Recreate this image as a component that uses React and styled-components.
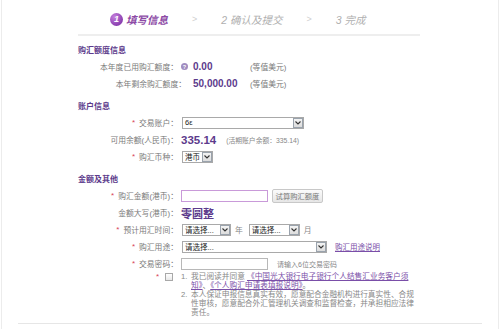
import React from 'react'
import styled, { createGlobalStyle } from 'styled-components'

const GlobalStyle = createGlobalStyle`
    html, body {
        margin: 0;
        padding: 0;
        background: #fff;
    }
    body {
        font-family: "Liberation Sans", "Noto Sans CJK SC", sans-serif;
        color: #777;
    }
`

const Frame = styled.div`
    width: 498px;
    height: 329px;
    margin-left: 1px;
    box-sizing: border-box;
    border-left: 1px solid #ececec;
    border-right: 1px solid #ececec;
    overflow: hidden;
`

const Column = styled.div`
    margin-left: 76px;
    width: 342px;
`

const Steps = styled.div`
    display: flex;
    align-items: center;
    gap: 24px;
    height: 30px;
    padding: 4px 0 0 32px;
    border-bottom: 2px solid #eeeeee;
`

const Step = styled.div`
    display: flex;
    align-items: center;
    gap: 3px;
    font-size: 10.5px;
    font-style: italic;
    font-weight: ${p => (p.$active ? 'bold' : 'normal')};
    color: ${p => (p.$active ? '#8d4aa6' : '#b0b0b0')};
`

const StepDot = styled.span`
    width: 13px;
    height: 13px;
    border-radius: 50%;
    background: radial-gradient(circle at 35% 30%, #c57fdc, #8a3fb0 70%);
    color: #fff;
    font-size: 9px;
    font-weight: bold;
    display: flex;
    align-items: center;
    justify-content: center;
`

const Chevron = styled.span`
    color: #cfcfcf;
    font-size: 9px;
    font-style: normal;
`

const Section = styled.div`
    margin-top: 5px;
`

const Heading = styled.div`
    height: 17px;
    display: flex;
    align-items: center;
    font-size: 8px;
    font-weight: bold;
    color: #5d3b8c;
`

const Row = styled.div`
    display: grid;
    grid-template-columns: ${p => p.$label || 103}px 1fr;
    column-gap: ${p => p.$gap || 0}px;
    align-items: center;
    height: 17px;
`

const Label = styled.div`
    display: flex;
    justify-content: flex-end;
    align-items: center;
    font-size: 7.8px;
    color: #7a7a7a;
    padding-right: ${p => (p.$pad === undefined ? 3 : p.$pad)}px;
    white-space: nowrap;
`

const Star = styled.span`
    color: #d8435a;
    font-size: 8px;
    margin-right: 4px;
`

const Help = styled.span`
    width: 7px;
    height: 7px;
    border-radius: 50%;
    background: #a08cc0;
    color: #fff;
    font-size: 5.5px;
    font-weight: bold;
    display: inline-flex;
    align-items: center;
    justify-content: center;
    margin-left: 3px;
`

const Value = styled.div`
    display: flex;
    align-items: center;
    font-size: 7.8px;
    color: #7a7a7a;
    white-space: nowrap;
`

const Amount = styled.span`
    font-weight: bold;
    color: #5d3b8c;
    font-size: ${p => p.$size || 10}px;
    width: ${p => (p.$w ? p.$w + 'px' : 'auto')};
`

const Hint = styled.span`
    font-size: ${p => p.$size || 7.8}px;
    color: #888;
    margin-left: ${p => p.$ml || 0}px;
`

const SelectBox = styled.div`
    display: flex;
    align-items: center;
    justify-content: space-between;
    box-sizing: border-box;
    width: ${p => p.$w}px;
    height: 12px;
    margin-left: 1px;
    border: 1px solid #a9a9a9;
    background: #fff;
    font-size: 7.5px;
    color: #222;
    padding-left: 2px;
    white-space: nowrap;
`

const ArrowBox = styled.span`
    box-sizing: border-box;
    flex: none;
    width: 10px;
    height: 10px;
    border: 1px solid #9aa3ad;
    background: linear-gradient(#f4f4f4, #dcdcdc);
    display: flex;
    align-items: center;
    justify-content: center;
`

const TextInput = styled.div`
    box-sizing: border-box;
    width: ${p => p.$w}px;
    height: 12px;
    border: 1px solid ${p => (p.$focus ? '#c99ad9' : '#b8b8b8')};
    background: #fff;
`

const Button = styled.button`
    margin-left: 4px;
    height: 14px;
    width: 51px;
    padding: 0;
    border: 1px solid #c8c8c8;
    border-radius: 2px;
    background: linear-gradient(#fbfbfb, #e6e6e6);
    font-family: inherit;
    font-size: 7.3px;
    color: #777;
`

const Unit = styled.span`
    font-size: 7.8px;
    color: #888;
    margin: 0 5px 0 4px;
`

const Link = styled.a`
    color: #7a4ea8;
    text-decoration: underline;
    font-size: 7.5px;
    margin-left: 8px;
`

const Agreement = styled.div`
    display: grid;
    grid-template-columns: 103px 1fr;
    align-items: start;
`

const CheckCell = styled.div`
    display: flex;
    justify-content: flex-end;
    align-items: center;
    height: 9px;
    padding-right: 8px;
`

const Check = styled.span`
    box-sizing: border-box;
    width: 8px;
    height: 8px;
    border: 1px solid #a8a8a8;
    background: linear-gradient(#fff, #e8e8e8);
    margin-left: 2px;
`

const Terms = styled.ol`
    margin: 0;
    padding: 0;
    list-style: none;
    width: 236px;
    font-size: 7.7px;
    line-height: 9px;
    color: #888;
`

const Term = styled.li`
    display: grid;
    grid-template-columns: 10px 1fr;
`

const TermLine = styled.span`
    display: block;
`

const TermLink = styled.a`
    color: #7a4ea8;
    text-decoration: underline;
`

const Rule = styled.div`
    margin: 6px 16px 0 16px;
    border-top: 1px solid #e6e6e6;
`

function Arrow()
{
    return (
        <ArrowBox>
            <svg width="6" height="4" viewBox="0 0 6 4">
                <polyline points="0.5,0.5 3,3 5.5,0.5" fill="none" stroke="#333" strokeWidth="1.1" />
            </svg>
        </ArrowBox>
    )
}

function Select({ width, children })
{
    return (
        <SelectBox $w={width}>
            <span>{children}</span>
            <Arrow />
        </SelectBox>
    )
}

export default function App()
{
    return (
        <>
            <GlobalStyle />
            <Frame>
                <Column>
                    <Steps>
                        <Step $active><StepDot>1</StepDot>填写信息</Step>
                        <Chevron>&gt;</Chevron>
                        <Step>2 确认及提交</Step>
                        <Chevron>&gt;</Chevron>
                        <Step>3 完成</Step>
                    </Steps>

                    <Section>
                        <Heading>购汇额度信息</Heading>
                        <Row $label={110} $gap={5}>
                            <Label $pad={0}>本年度已用购汇额度：<Help>?</Help></Label>
                            <Value><Amount $w={57}>0.00</Amount>(等值美元)</Value>
                        </Row>
                        <Row $label={110} $gap={5}>
                            <Label $pad={2}>本年剩余购汇额度：</Label>
                            <Value><Amount $w={57}>50,000.00</Amount>(等值美元)</Value>
                        </Row>
                    </Section>

                    <Section>
                        <Heading>账户信息</Heading>
                        <Row>
                            <Label><Star>*</Star>交易账户：</Label>
                            <Value><Select width={122}>6ε</Select></Value>
                        </Row>
                        <Row>
                            <Label>可用余额(人民币)：</Label>
                            <Value>
                                <Amount $size={11.5}>335.14</Amount>
                                <Hint $size={6.8} $ml={10}>(活期账户余额：335.14)</Hint>
                            </Value>
                        </Row>
                        <Row>
                            <Label><Star>*</Star>购汇币种：</Label>
                            <Value><Select width={31}>港币</Select></Value>
                        </Row>
                    </Section>

                    <Section>
                        <Heading>金额及其他</Heading>
                        <Row>
                            <Label><Star>*</Star>购汇金额(港币)：</Label>
                            <Value>
                                <TextInput $w={87} $focus />
                                <Button>试算购汇额度</Button>
                            </Value>
                        </Row>
                        <Row>
                            <Label>金额大写(港币)：</Label>
                            <Value><Amount $size={11}>零圆整</Amount></Value>
                        </Row>
                        <Row>
                            <Label><Star>*</Star>预计用汇时间：</Label>
                            <Value>
                                <Select width={49}>请选择...</Select>
                                <Unit>年</Unit>
                                <Select width={51}>请选择...</Select>
                                <Unit>月</Unit>
                            </Value>
                        </Row>
                        <Row>
                            <Label><Star>*</Star>购汇用途：</Label>
                            <Value>
                                <Select width={145}>请选择...</Select>
                                <Link>购汇用途说明</Link>
                            </Value>
                        </Row>
                        <Row>
                            <Label><Star>*</Star>交易密码：</Label>
                            <Value>
                                <TextInput $w={87} />
                                <Hint $size={7} $ml={9}>请输入6位交易密码</Hint>
                            </Value>
                        </Row>
                        <Agreement>
                            <CheckCell><Star>*</Star><Check /></CheckCell>
                            <Terms>
                                <Term>
                                    <span>1.</span>
                                    <span>
                                        <TermLine>我已阅读并同意 <TermLink>《中国光大银行电子银行个人结售汇业务客户须</TermLink></TermLine>
                                        <TermLine><TermLink>知》</TermLink>、<TermLink>《个人购汇申请表填报说明》</TermLink>。</TermLine>
                                    </span>
                                </Term>
                                <Term>
                                    <span>2.</span>
                                    <span>本人保证申报信息真实有效，愿意配合金融机构进行真实性、合规性审核，愿意配合外汇管理机关调查和监督检查，并承担相应法律责任。</span>
                                </Term>
                            </Terms>
                        </Agreement>
                    </Section>
                </Column>
                <Rule />
            </Frame>
        </>
    )
}
